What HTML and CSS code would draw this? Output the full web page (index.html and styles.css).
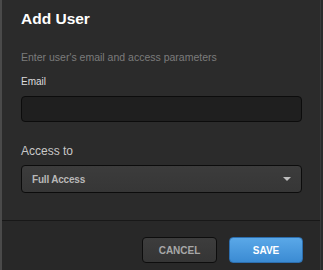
FILE: index.html
```html
<!DOCTYPE html>
<html>
   <head>
      <meta name="viewport" content="width=device-width, initial-scale=1.0">
      <title>Add User</title>
      <link rel="stylesheet" href="styles.css">
   </head>
<body>
<div class="dialog">
	<div class="dialogBody">
		<h1 class="title">Add User</h1>
		<p class="subtitle">Enter user's email and access parameters</p>
		<label class="fieldLabel">Email</label>
		<div class="textInput"></div>
		<label class="accessLabel">Access to</label>
		<div class="selectBox">
			<span class="selectText">Full Access</span>
			<span class="selectArrow"></span>
		</div>
	</div>
	<div class="dialogFooter">
		<button class="btn btnCancel">CANCEL</button>
		<button class="btn btnSave">SAVE</button>
	</div>
</div>
</body>
</html>
```

FILE: styles.css
```css
html, body, div, span, h1, p, label, button {
	margin: 0;
	padding: 0;
	border: 0;
	font: inherit;
}
body {
	background: #2a2a2a;
	font-family: "Liberation Sans", Arial, sans-serif;
	width: 323px;
	height: 270px;
	overflow: hidden;
}
.dialog {
	height: 270px;
	width: 318px;
	border-left: 2px solid #4a4a4a;
	border-right: 1px solid #3a3a3a;
	background: #2b2b2b;
	display: flex;
	flex-direction: column;
}
.dialogBody {
	padding: 10px 18px 0 19px;
	height: 210px;
	display: flex;
	flex-direction: column;
	border-bottom: 1px solid #181818;
}
.title {
	font-size: 15.5px;
	font-weight: bold;
	color: #ffffff;
	line-height: 18px;
}
.subtitle {
	margin-top: 22px;
	font-size: 10.5px;
	color: #7c7c7c;
	line-height: 14px;
}
.fieldLabel {
	margin-top: 12px;
	font-size: 10px;
	color: #dcdcdc;
	line-height: 12px;
}
.textInput {
	margin-top: 8px;
	height: 24px;
	background: #1f1f1f;
	border: 1px solid #0c0c0c;
	border-radius: 4px;
}
.accessLabel {
	margin-top: 22px;
	font-size: 12px;
	color: #c8c8c8;
	line-height: 14px;
}
.selectBox {
	margin-top: 7px;
	height: 26px;
	background: linear-gradient(#3c3c3c, #363636);
	border: 1px solid #0c0c0c;
	border-radius: 4px;
	display: flex;
	align-items: center;
	justify-content: space-between;
	padding: 0 10px 0 10px;
}
.selectText {
	font-size: 10px;
	font-weight: bold;
	color: #b8b8b8;
	letter-spacing: -0.2px;
}
.selectArrow {
	width: 0;
	height: 0;
	border-left: 4px solid transparent;
	border-right: 4px solid transparent;
	border-top: 4px solid #bdbdbd;
}
.dialogFooter {
	flex: 1;
	background: #282828;
	display: flex;
	justify-content: flex-end;
	align-items: flex-start;
	gap: 12px;
	padding: 16px 17px 0 0;
}
.btn {
	height: 26px;
	border-radius: 4px;
	font-size: 10px;
	font-weight: bold;
	font-family: "Liberation Sans", Arial, sans-serif;
	cursor: pointer;
}
.btnCancel {
	width: 75px;
	background: linear-gradient(#3d3d3d, #353535);
	border: 1px solid #0d0d0d;
	color: #a8a8a8;
}
.btnSave {
	width: 74px;
	background: linear-gradient(#5aa8e8, #3b8bd3);
	border: 1px solid #2c6eae;
	color: #ffffff;
}
```
